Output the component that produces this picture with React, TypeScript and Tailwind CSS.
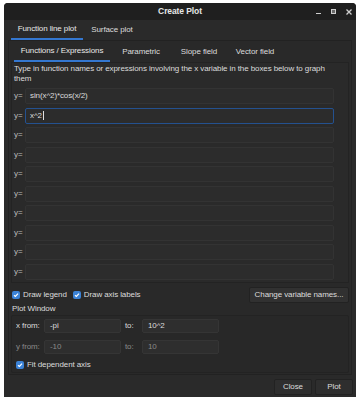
import React from "react";

const FUNCS = ["sin(x^2)*cos(x/2)", "x^2", "", "", "", "", "", "", "", ""];

const Check = () => (
    <span className="w-[8px] h-[8px] rounded-[2px] bg-[#3b82d6] flex items-center justify-center shrink-0">
        <svg width="6" height="6" viewBox="0 0 6 6">
            <path d="M1 3.2 L2.4 4.5 L5 1.6" stroke="white" strokeWidth="1.2" fill="none" />
        </svg>
    </span>
);

const Field = ({ value, disabled = false, className = "" }: { value: string; disabled?: boolean; className?: string }) => (
    <div className={`h-[14px] flex items-center px-[5px] rounded-[2px] border border-[#353535] bg-[#2e2e2e] ${disabled ? "text-[#8a8a8a]" : ""} ${className}`}>
        {value}
    </div>
);

export default function App() {
    return (
        <div className="w-[360px] h-[400px] bg-white pt-[3px] pl-[4px] font-['Liberation_Sans',sans-serif] text-[8px] tracking-[-0.1px] text-[#dcdcdc]">
            <div className="w-[352px] h-[394px] bg-[#2a2a2a] flex flex-col rounded-t-[4px] overflow-hidden">
                {/* title bar */}
                <div className="h-[17px] shrink-0 bg-[#1f1f1f] relative flex items-center justify-center">
                    <span className="font-bold text-[8.5px] text-[#e6e6e6]">Create Plot</span>
                    <div className="absolute right-[4px] top-0 h-full flex items-center gap-[10px]">
                        <span className="w-[5px] h-[1px] bg-[#cfcfcf] mt-[3px]" />
                        <span className="w-[5px] h-[5px] border border-[#cfcfcf] bg-[#6a6a6a]" />
                        <svg width="6" height="6" viewBox="0 0 6 6">
                            <path d="M0.5 0.5 L5.5 5.5 M5.5 0.5 L0.5 5.5" stroke="#cfcfcf" strokeWidth="1.3" />
                        </svg>
                    </div>
                </div>

                {/* outer tabs */}
                <div className="h-[20px] shrink-0 flex items-stretch pl-[7px]">
                    <div className="w-[72px] flex items-center justify-center border-b-2 border-[#3477d0] text-[#e8e8e8]">Function line plot</div>
                    <div className="w-[58px] flex items-center justify-center">Surface plot</div>
                </div>

                {/* outer pane */}
                <div className="mx-[4px] h-[335px] shrink-0 border border-[#222222] bg-[#292929] px-[2px] flex flex-col">
                    {/* inner tabs */}
                    <div className="h-[21px] shrink-0 flex items-stretch pl-[3px] gap-[2px]">
                        <div className="w-[96px] flex items-center justify-center border-b-2 border-[#3477d0] text-[#e8e8e8]">Functions / Expressions</div>
                        <div className="w-[58px] flex items-center justify-center">Parametric</div>
                        <div className="w-[54px] flex items-center justify-center">Slope field</div>
                        <div className="w-[54px] flex items-center justify-center">Vector field</div>
                    </div>

                    {/* functions panel */}
                    <div className="h-[221px] shrink-0 border border-[#232323] bg-[#2a2a2a] px-[2px] pt-[1px] flex flex-col">
                        <p className="leading-[10px] pr-[6px]">
                            Type in function names or expressions involving the x variable in the boxes below to graph them
                        </p>
                        <div className="mt-[4px] flex flex-col gap-[3.5px]">
                            {FUNCS.map((f, i) => (
                                <div key={i} className="flex items-center">
                                    <span className="w-[11px] text-[#bdbdbd]">y=</span>
                                    <div
                                        className={`w-[309px] h-[16px] flex items-center px-[4px] rounded-[2px] border ${
                                            i === 1 ? "border-[#24518f]" : "border-[#333333]"
                                        } bg-[#2c2c2c]`}
                                    >
                                        {f}
                                        {i === 1 && <span className="w-[1px] h-[9px] bg-[#e0e0e0] ml-[1px]" />}
                                    </div>
                                </div>
                            ))}
                        </div>
                    </div>

                    {/* options row */}
                    <div className="h-[19px] shrink-0 mt-[2px] flex items-center">
                        <div className="flex items-center gap-[3px] ml-[1px]">
                            <Check />
                            <span>Draw legend</span>
                        </div>
                        <div className="flex items-center gap-[3px] ml-[6px]">
                            <Check />
                            <span>Draw axis labels</span>
                        </div>
                        <button className="ml-auto w-[100px] h-[16px] rounded-[2px] border border-[#222222] bg-[#313131] text-[#dcdcdc]">
                            Change variable names...
                        </button>
                    </div>

                    {/* plot window */}
                    <div className="ml-[1px] h-[10px] shrink-0 leading-[10px]">Plot Window</div>
                    <div className="mt-[1px] h-[58px] shrink-0 border border-[#232323] rounded-[2px] bg-[#282828] px-[4px] pt-[3px] flex flex-col gap-[7px]">
                        <div className="flex items-center">
                            <span className="w-[28px]">x from:</span>
                            <Field value="-pi" className="w-[77px]" />
                            <span className="w-[17px] ml-[4px]">to:</span>
                            <Field value="10^2" className="w-[77px]" />
                        </div>
                        <div className="flex items-center text-[#8a8a8a]">
                            <span className="w-[28px]">y from:</span>
                            <Field value="-10" disabled className="w-[77px]" />
                            <span className="w-[17px] ml-[4px]">to:</span>
                            <Field value="10" disabled className="w-[77px]" />
                        </div>
                        <div className="flex items-center gap-[3px] -mt-[2px]">
                            <Check />
                            <span>Fit dependent axis</span>
                        </div>
                    </div>
                </div>

                {/* bottom buttons */}
                <div className="flex justify-end gap-[3px] pr-[3px] pt-[4px]">
                    <button className="w-[38px] h-[16px] rounded-[2px] border border-[#222222] bg-[#2e2e2e] text-[#dcdcdc]">Close</button>
                    <button className="w-[38px] h-[16px] rounded-[2px] border border-[#222222] bg-[#2e2e2e] text-[#dcdcdc]">Plot</button>
                </div>
            </div>
        </div>
    );
}
